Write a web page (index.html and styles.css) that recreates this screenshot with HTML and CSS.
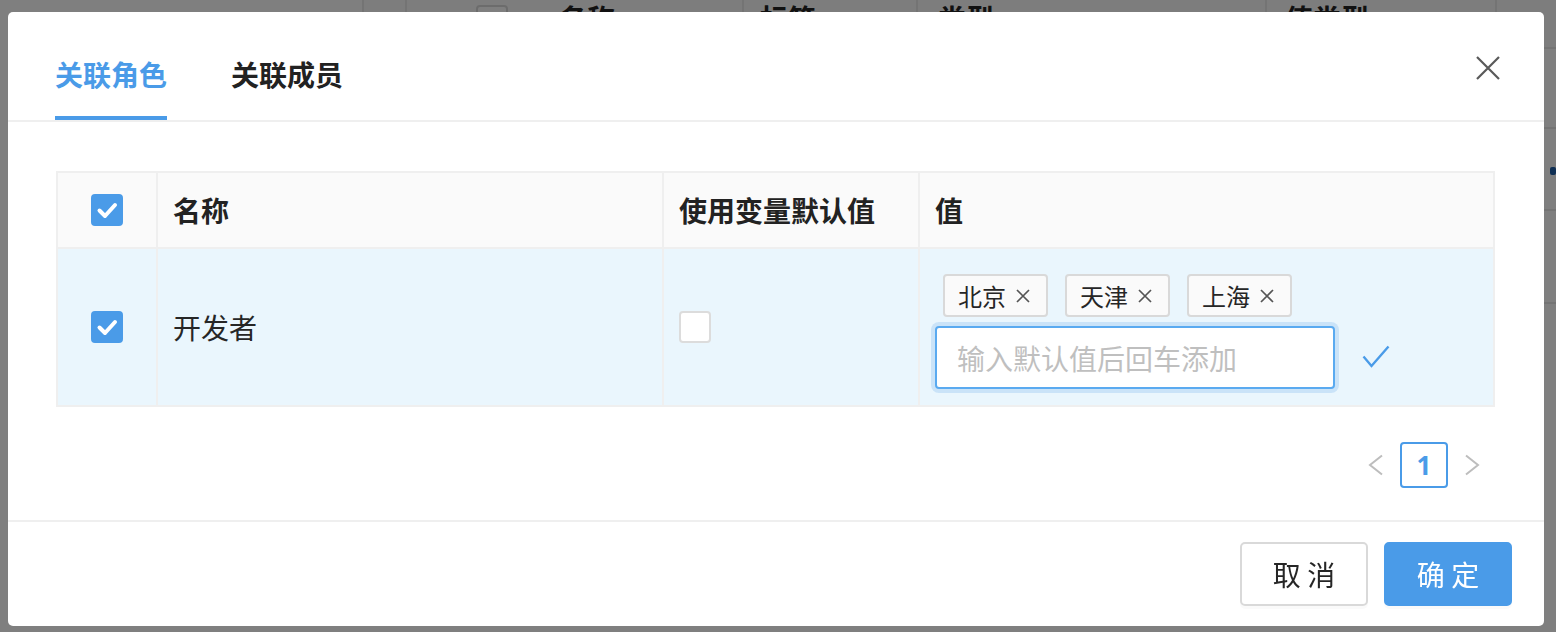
FILE: index.html
```html
<!DOCTYPE html>
<html lang="zh-CN">
<head>
<meta charset="utf-8">
<title>关联角色</title>
<link rel="stylesheet" href="styles.css">
</head>
<body>
<div class="page">
  <div class="bg-table">
    <div class="bg-row bg-head">
      <div class="bg-cell c0"></div>
      <div class="bg-cell c1"><span class="bg-box"></span><span class="bg-text">名称</span></div>
      <div class="bg-cell c2"><span class="bg-text">标签</span></div>
      <div class="bg-cell c3"><span class="bg-text">类型</span></div>
      <div class="bg-cell c4"><span class="bg-text">值类型</span></div>
      <div class="bg-cell c5"></div>
    </div>
    <div class="bg-row r1"></div>
    <div class="bg-row r2"><span class="bg-mark"></span></div>
    <div class="bg-row r3"></div>
  </div>
</div>

<div class="overlay"></div>

<div class="modal">
  <div class="modal-header">
    <div class="tabs">
      <div class="tab active">关联角色</div>
      <div class="tab">关联成员</div>
    </div>
    <button class="close" aria-label="关闭">
      <svg width="24" height="24" viewBox="0 0 24 24"><path d="M1 1 L23 23 M23 1 L1 23" stroke="#595959" stroke-width="2.2" fill="none"/></svg>
    </button>
  </div>

  <div class="modal-body">
    <div class="table">
      <div class="cell head center">
        <span class="checkbox checked"><svg width="32" height="32" viewBox="0 0 32 32"><polyline points="8.5,16.5 14,22 24,11" stroke="#fff" stroke-width="4" fill="none" stroke-linecap="round" stroke-linejoin="round"/></svg></span>
      </div>
      <div class="cell head">名称</div>
      <div class="cell head">使用变量默认值</div>
      <div class="cell head">值</div>

      <div class="cell row center">
        <span class="checkbox checked"><svg width="32" height="32" viewBox="0 0 32 32"><polyline points="8.5,16.5 14,22 24,11" stroke="#fff" stroke-width="4" fill="none" stroke-linecap="round" stroke-linejoin="round"/></svg></span>
      </div>
      <div class="cell row">开发者</div>
      <div class="cell row"><span class="checkbox"></span></div>
      <div class="cell row value">
        <div class="tags">
          <span class="tag">北京<svg width="14" height="14" viewBox="0 0 14 14"><path d="M1 1 L13 13 M13 1 L1 13" stroke="#555" stroke-width="1.7"/></svg></span>
          <span class="tag">天津<svg width="14" height="14" viewBox="0 0 14 14"><path d="M1 1 L13 13 M13 1 L1 13" stroke="#555" stroke-width="1.7"/></svg></span>
          <span class="tag">上海<svg width="14" height="14" viewBox="0 0 14 14"><path d="M1 1 L13 13 M13 1 L1 13" stroke="#555" stroke-width="1.7"/></svg></span>
        </div>
        <div class="input-line">
          <input class="input" type="text" placeholder="输入默认值后回车添加">
          <svg class="ok" width="28" height="23" viewBox="0 0 28 23"><polyline points="1.5,11.5 9.5,21 26.5,1.5" stroke="#4a9be8" stroke-width="2.4" fill="none"/></svg>
        </div>
      </div>
    </div>

    <div class="pagination">
      <span class="pg-arrow"><svg width="16" height="22" viewBox="0 0 16 22"><polyline points="14,1.5 2,11 14,20.5" stroke="#bdbdbd" stroke-width="2" fill="none"/></svg></span>
      <span class="pg-item">1</span>
      <span class="pg-arrow"><svg width="16" height="22" viewBox="0 0 16 22"><polyline points="2,1.5 14,11 2,20.5" stroke="#bdbdbd" stroke-width="2" fill="none"/></svg></span>
    </div>
  </div>

  <div class="modal-footer">
    <button class="btn">取 消</button>
    <button class="btn primary">确 定</button>
  </div>
</div>
</body>
</html>
```

FILE: styles.css
```css
* { box-sizing: border-box; }

html, body {
  margin: 0;
  padding: 0;
  width: 1556px;
  height: 632px;
  overflow: hidden;
  font-family: "Noto Sans CJK SC", "Noto Sans", sans-serif;
  color: #262626;
  background: #ffffff;
}

/* ---------- background page ---------- */
.page {
  width: 1556px;
  height: 632px;
  padding-left: 362px;
}

.bg-table {
  width: 1194px;
}

.bg-row {
  display: flex;
  border-bottom: 2px solid #e8e8e8;
  position: relative;
}

.bg-head {
  height: 49px;
  background: #fafafa;
}

.bg-cell {
  border-left: 2px solid #e8e8e8;
  display: flex;
  align-items: flex-start;
  padding-top: 2px;
}

.c0 { width: 43px; }
.c1 { width: 337px; padding-left: 69px; }
.c2 { width: 174px; padding-left: 16px; }
.c3 { width: 349px; padding-left: 20px; }
.c4 { width: 230px; padding-left: 18px; }
.c5 { flex: 1; }

.bg-box {
  width: 32px;
  height: 32px;
  border: 2px solid #d9d9d9;
  border-radius: 4px;
  background: #fff;
  margin-top: 3px;
}

.c1 .bg-text { margin-left: 51px; }

.bg-text {
  font-size: 28px;
  line-height: 32px;
  font-weight: 700;
  color: #222;
}

.r1 { height: 80px; }
.r2 { height: 82px; }
.r3 { height: 93px; }

.bg-mark {
  position: absolute;
  right: 0;
  top: 38px;
  width: 6px;
  height: 8px;
  background: #1f5fa8;
  border-radius: 2px;
}

/* ---------- overlay ---------- */
.overlay {
  position: fixed;
  inset: 0;
  background: rgba(0, 0, 0, 0.5);
}

/* ---------- modal ---------- */
.modal {
  position: fixed;
  left: 8px;
  top: 12px;
  width: 1536px;
  height: 614px;
  background: #fff;
  border-radius: 5px;
  display: flex;
  flex-direction: column;
}

.modal-header {
  height: 110px;
  border-bottom: 2px solid #efefef;
  display: flex;
  padding: 0 44px 0 47px;
}

.tabs {
  display: flex;
  gap: 64px;
}

.tab {
  font-size: 28px;
  line-height: 40px;
  font-weight: 700;
  color: #222;
  padding-top: 42px;
  height: 108px;
  border-bottom: 4px solid transparent;
  letter-spacing: 0;
}

.tab.active {
  color: #4a9be8;
  border-bottom-color: #4a9be8;
}

.close {
  margin-left: auto;
  margin-top: 44px;
  align-self: flex-start;
  width: 24px;
  height: 24px;
  padding: 0;
  border: 0;
  background: transparent;
  display: flex;
}

.modal-body {
  padding: 49px 49px 32px 48px;
  flex: 1;
}

.table {
  display: grid;
  grid-template-columns: 98px 504px 254px 1fr;
  grid-template-rows: 74px 156px;
  gap: 2px;
  padding: 2px;
  background: #efefef;
}

.cell {
  display: flex;
  align-items: center;
  padding: 0 15px;
  font-size: 28px;
  line-height: 40px;
}

.cell.head {
  background: #fafafa;
  font-weight: 700;
  color: #222;
}

.cell.row {
  background: #eaf6fd;
  color: #262626;
}

.cell.center {
  justify-content: center;
  padding: 0;
}

.checkbox {
  width: 32px;
  height: 32px;
  border-radius: 4px;
  border: 2px solid #dcdcdc;
  background: #fff;
  display: block;
  position: relative;
}

.checkbox.checked {
  background: #4a9be8;
  border-color: #4a9be8;
}

.checkbox.checked svg {
  position: absolute;
  left: -2px;
  top: -2px;
}

.cell.value {
  flex-direction: column;
  align-items: flex-start;
  justify-content: flex-start;
  padding: 25px 16px 0 15px;
}

.tags {
  display: flex;
  gap: 17px;
  padding-left: 8px;
}

.tag {
  height: 43px;
  display: flex;
  align-items: center;
  gap: 10px;
  padding: 0 16px 0 13px;
  border: 2px solid #d9d9d9;
  border-radius: 4px;
  background: #fafafa;
  font-size: 24px;
  color: #262626;
}

.input-line {
  display: flex;
  align-items: center;
  margin-top: 9px;
}

.input {
  width: 400px;
  height: 63px;
  border: 2px solid #5aaaf0;
  border-radius: 4px;
  box-shadow: 0 0 0 4px rgba(74, 155, 232, 0.2);
  padding: 0 20px;
  font-family: "Noto Sans CJK SC", "Noto Sans", sans-serif;
  font-size: 28px;
  color: #262626;
  outline: none;
  background: #fff;
}

.input::placeholder {
  color: #bfbfbf;
}

.ok {
  margin-left: 27px;
  margin-top: -2px;
}

.pagination {
  display: flex;
  justify-content: flex-end;
  margin-top: 35px;
  margin-right: -1px;
  height: 46px;
}

.pg-arrow {
  width: 48px;
  height: 46px;
  display: flex;
  align-items: center;
  justify-content: center;
}

.pg-item {
  width: 48px;
  height: 46px;
  border: 2px solid #4a9be8;
  border-radius: 4px;
  display: flex;
  align-items: center;
  justify-content: center;
  color: #4a9be8;
  font-size: 26px;
  font-weight: 700;
  font-family: "Noto Sans", "Noto Sans CJK SC", sans-serif;
}

.modal-footer {
  border-top: 2px solid #efefef;
  padding: 20px 32px 20px 0;
  display: flex;
  justify-content: flex-end;
  gap: 16px;
}

.btn {
  width: 128px;
  height: 64px;
  border: 2px solid #d9d9d9;
  border-radius: 5px;
  background: #fff;
  font-family: "Noto Sans CJK SC", "Noto Sans", sans-serif;
  font-size: 28px;
  color: #262626;
  box-shadow: 0 3px 0 rgba(0, 0, 0, 0.02);
  padding: 0;
}

.btn.primary {
  background: #4a9be8;
  border-color: #4a9be8;
  color: #fff;
}
```
